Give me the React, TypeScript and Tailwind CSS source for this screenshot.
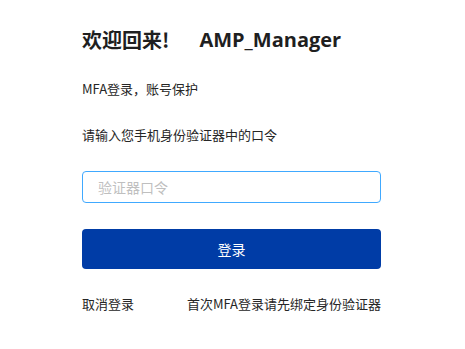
export default function App() {
  return (
    <main
      className="min-h-screen bg-white text-[#262626]"
      style={{ fontFamily: '"Noto Sans CJK SC", "Noto Sans", sans-serif' }}
    >
      <div className="ml-[82px] w-[299px] pt-[26px]">
        <h1 className="flex text-[20px] leading-[28px] font-bold text-[#1f1f1f]">
          <span>欢迎回来!</span>
          <span
            className="ml-[30px]"
            style={{ fontFamily: '"Open Sans", "Noto Sans CJK SC", sans-serif' }}
          >
            AMP_Manager
          </span>
        </h1>
        <p className="mt-[24px] text-[13px] leading-[22px]">MFA登录，账号保护</p>
        <p className="mt-[24px] text-[13px] leading-[22px]">请输入您手机身份验证器中的口令</p>
        <input
          type="text"
          placeholder="验证器口令"
          className="mt-[25px] block h-[32px] w-full rounded-[4px] border border-[#40a9ff] px-[15px] text-[14px] outline-none placeholder:text-[#bfbfbf]"
        />
        <button className="mt-[26px] flex h-[40px] w-full items-center justify-center rounded-[4px] bg-[#003ca6] text-[14px] text-white">
          登录
        </button>
        <div className="mt-[24px] flex justify-between text-[13px] leading-[22px]">
          <span>取消登录</span>
          <span>首次MFA登录请先绑定身份验证器</span>
        </div>
      </div>
    </main>
  );
}
